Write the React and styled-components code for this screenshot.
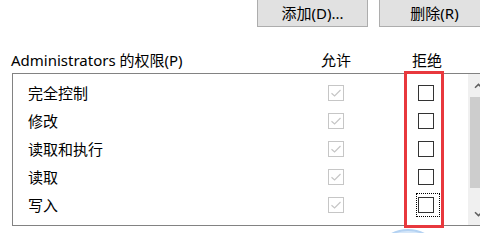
import React from "react";
import styled, { createGlobalStyle } from "styled-components";

const GlobalStyle = createGlobalStyle`
  html, body {
    margin: 0;
    padding: 0;
    background: #ffffff;
  }
  body {
    font-family: "Noto Sans", "Noto Sans CJK SC", sans-serif;
    font-size: 15px;
    color: #000000;
  }
`;

const Page = styled.div`
  position: relative;
  width: 480px;
  height: 233px;
  overflow: hidden;
  background: #ffffff;
`;

const ButtonRow = styled.div`
  display: flex;
  gap: 11px;
  padding-left: 257px;
  margin-top: -4px;
`;

const Button = styled.button`
  flex: none;
  width: 111px;
  height: 31px;
  padding: 0;
  padding-top: 3px;
  background: #e1e1e1;
  border: 1px solid #adadad;
  font-family: inherit;
  font-size: 15px;
  line-height: 20px;
  color: #000000;
`;

const Header = styled.div`
  display: grid;
  grid-template-columns: 295px 60px 1fr;
  height: 20px;
  margin-top: 23px;
  padding-left: 11px;
  line-height: 20px;
  white-space: nowrap;
`;

const HeadCell = styled.div`
  text-align: ${({ center }) => (center ? "center" : "left")};
  padding-left: ${({ indent }) => indent || 0}px;
`;

const ListBox = styled.div`
  display: flex;
  width: 477px;
  height: 153px;
  margin-top: 3px;
  margin-left: 12px;
  box-sizing: border-box;
  border: 1px solid #828282;
`;

const Rows = styled.div`
  width: 455px;
  flex: none;
  padding-top: 5px;
`;

const Row = styled.div`
  display: grid;
  grid-template-columns: 278px 60px 1fr;
  align-items: center;
  height: 28px;
  padding-left: 15px;
`;

const Name = styled.div`
  line-height: 28px;
  white-space: nowrap;
`;

const AllowCell = styled.div`
  display: flex;
  justify-content: center;
`;

const DenyCell = styled.div`
  display: flex;
  padding-left: 50px;
`;

const Focus = styled.div`
  display: flex;
  padding: 3px 5px 3px 1px;
  border: 1px dotted ${({ active }) => (active ? "#000000" : "transparent")};
`;

const Box = styled.div`
  display: flex;
  align-items: center;
  justify-content: center;
  width: 16px;
  height: 16px;
  box-sizing: border-box;
  background: #ffffff;
  border: 1px solid ${({ disabled }) => (disabled ? "#c6c6c6" : "#333333")};
`;

const Scrollbar = styled.div`
  display: flex;
  flex-direction: column;
  width: 20px;
  flex: none;
  background: #f0f0f0;
`;

const ArrowButton = styled.div`
  display: flex;
  align-items: center;
  justify-content: center;
  height: 23px;
  flex: none;
`;

const Thumb = styled.div`
  height: 91px;
  margin: 0 2px;
  background: #cdcdcd;
`;

const Track = styled.div`
  flex: 1;
`;

const Highlight = styled.div`
  position: absolute;
  left: 404px;
  top: 71px;
  width: 40px;
  height: 157px;
  box-sizing: border-box;
  border: 3px solid #e8383d;
`;

const Cursor = styled.div`
  position: absolute;
  left: 372px;
  top: 229px;
  width: 72px;
  height: 72px;
  box-sizing: border-box;
  border-radius: 50%;
  background: #d6e7f9;
  border: 2px solid #b4d2f2;
`;

const permissions = ["完全控制", "修改", "读取和执行", "读取", "写入"];

const Check = () => (
  <svg width="12" height="10" viewBox="0 0 12 10">
    <path d="M1.5 5.2 L4.6 8 L10.5 2" fill="none" stroke="#c6c6c6" strokeWidth="1.2" />
  </svg>
);

const Chevron = ({ down }) => (
  <svg width="9" height="6" viewBox="0 0 9 6">
    <path
      d={down ? "M1 1.2 L4.5 4.6 L8 1.2" : "M1 4.8 L4.5 1.4 L8 4.8"}
      fill="none"
      stroke="#606060"
      strokeWidth="1.5"
    />
  </svg>
);

const App = () => {
  return (
    <Page>
      <GlobalStyle />
      <ButtonRow>
        <Button>添加(D)...</Button>
        <Button>删除(R)</Button>
      </ButtonRow>
      <Header>
        <HeadCell>Administrators 的权限(P)</HeadCell>
        <HeadCell center>允许</HeadCell>
        <HeadCell indent={46}>拒绝</HeadCell>
      </Header>
      <ListBox>
        <Rows>
          {permissions.map((name, i) => (
            <Row key={name}>
              <Name>{name}</Name>
              <AllowCell>
                <Box disabled>
                  <Check />
                </Box>
              </AllowCell>
              <DenyCell>
                <Focus active={i === permissions.length - 1}>
                  <Box />
                </Focus>
              </DenyCell>
            </Row>
          ))}
        </Rows>
        <Scrollbar>
          <ArrowButton>
            <Chevron />
          </ArrowButton>
          <Thumb />
          <Track />
          <ArrowButton>
            <Chevron down />
          </ArrowButton>
        </Scrollbar>
      </ListBox>
      <Highlight />
      <Cursor />
    </Page>
  );
};

export default App;
